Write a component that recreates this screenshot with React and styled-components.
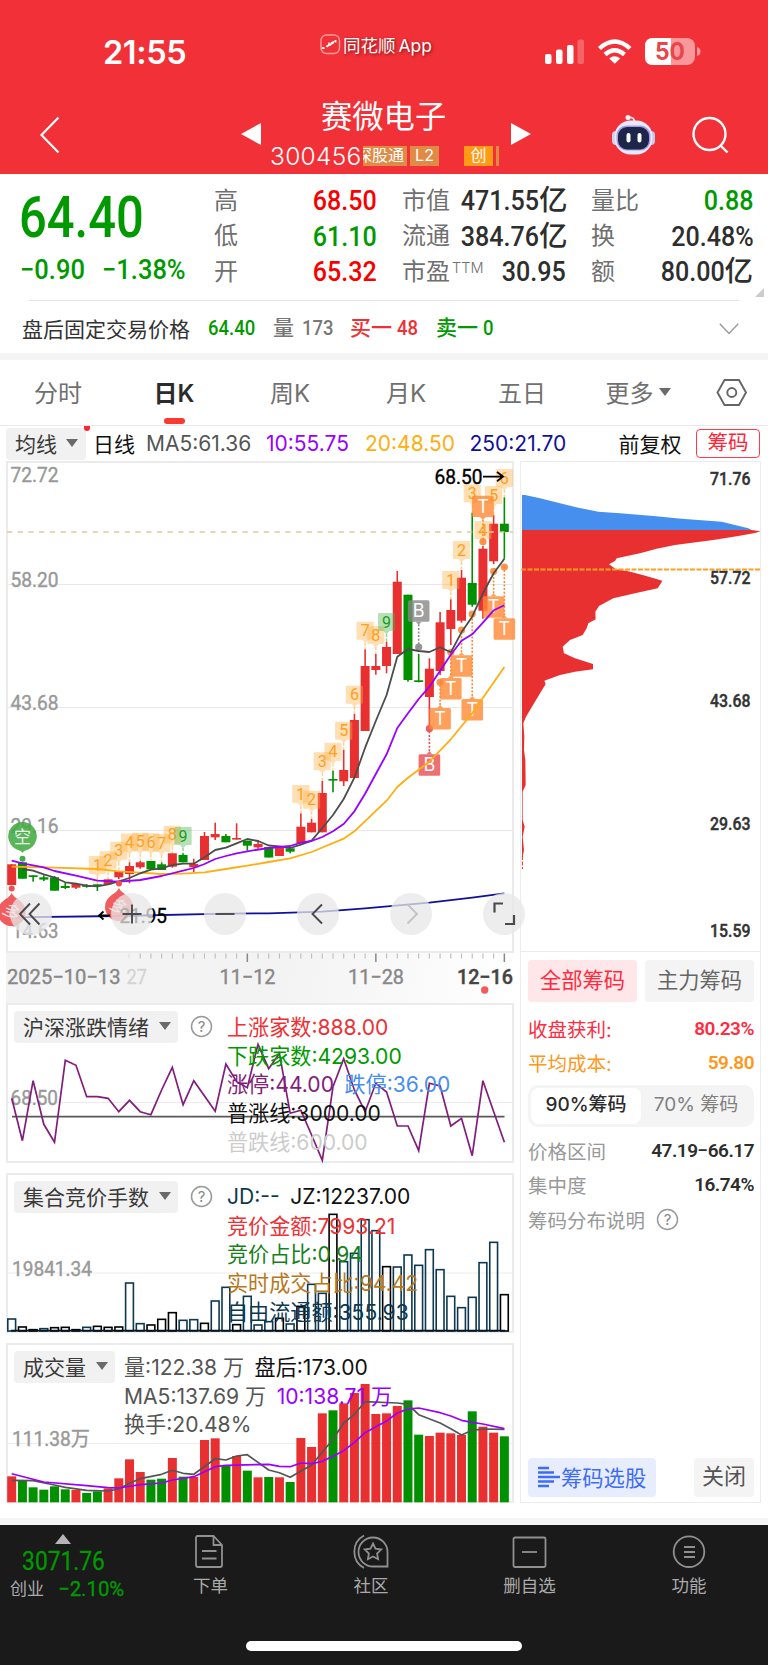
import React from 'react'
import styled, { createGlobalStyle } from 'styled-components'

const RED = '#e93030'
const GREEN = '#009000'
const DIN = 'Roboto, "Noto Sans CJK SC", sans-serif'

// x of the centre of the nth trading day, shared by all four charts
const dayX = i => 11.7 + i * 10.71

// [up, body top, body bottom, high, low]
const candles = [
  [1, 864.3, 885, 864.3, 885], [0, 862.3, 878.7, 862.3, 878.7], [0, 875.3, 877, 875.3, 881.7],
  [0, 877.3, 879.6, 875.3, 881], [0, 877.3, 890.7, 876, 890.7], [0, 886, 888, 882.7, 889],
  [1, 884, 887.7, 884, 889], [0, 885.3, 886.9, 884, 887.7], [0, 884.3, 885.9, 884.3, 891],
  [1, 879.3, 884.3, 879.3, 884.3], [1, 871, 877.3, 871, 879], [1, 866, 874, 862.3, 883.3],
  [1, 862.3, 867.3, 861, 868.7], [0, 861, 869.3, 861, 869.3], [0, 864.3, 870, 862.3, 870],
  [1, 853.3, 866.7, 853.3, 867.7], [0, 855, 862.3, 853.3, 862.3], [1, 864, 867.3, 858.7, 872.3],
  [1, 836, 860, 832, 860], [1, 834, 837.3, 822.7, 840], [0, 836, 842.3, 834, 842.3],
  [1, 838, 839.6, 823.3, 839.6], [0, 840.7, 845.7, 840.7, 850.7], [1, 844, 847.3, 840, 848.7],
  [0, 847, 857.5, 847, 857.5], [1, 847.7, 856, 847.7, 856], [0, 848.3, 851.7, 846.7, 853.3],
  [1, 826.7, 843.3, 813.3, 843.3], [1, 822.7, 832.3, 819, 832.3], [1, 793, 832.3, 781, 832.3],
  [0, 779, 780.6, 770.7, 792.3], [1, 770, 781.3, 750, 786], [1, 720, 778, 714, 778],
  [1, 666, 731, 649.3, 731], [1, 666, 670, 654, 674.7], [1, 647, 666, 641.7, 673.3],
  [1, 581.7, 654, 571, 654], [0, 594.7, 680, 594.7, 681.7], [0, 680.3, 682, 654, 682.3],
  [1, 668.7, 697, 658.3, 726.7], [1, 622.3, 671, 612, 675], [1, 610, 629, 599.3, 645],
  [1, 577.7, 620.7, 570, 622.7], [0, 583, 604.7, 512.7, 606.7], [1, 548.7, 610.7, 546, 618.7],
  [1, 523.7, 561.3, 515, 564], [0, 523.7, 532, 497.3, 558.7],
]

// moving averages as [day, y]
const ma5 = [
  [1, 869], [2, 870.7], [3, 874.3], [4, 877.5], [5, 882.3], [6, 883.7], [7, 885.7], [8, 886.3], [9, 884.3],
  [10, 881.3], [11, 878], [12, 873.3], [13, 869.7], [14, 868.3], [15, 865], [16, 863.7], [17, 863.7],
  [18, 857.3], [19, 850], [20, 847.7], [21, 843.3], [22, 839], [23, 841], [24, 845.5], [25, 846.3],
  [26, 848], [27, 844.7], [28, 840.7], [29, 828], [30, 815], [31, 799], [32, 777.7], [33, 747.7],
  [34, 721], [35, 695], [36, 656.7], [37, 649], [38, 651], [39, 652], [40, 647.3], [41, 652.3],
  [42, 632.3], [43, 616.7], [44, 593.3], [45, 573.3], [46, 558.7],
]
const ma10 = [
  [0, 860.7], [1, 863.3], [3, 867.3], [4, 871], [6, 875.7], [8, 880.7], [10, 881.7], [12, 880], [14, 876],
  [16, 870.7], [17, 868], [18, 864], [19, 859], [20, 856], [21, 853.3], [22, 851.3], [24, 848],
  [26, 846], [27, 842.7], [28, 841], [29, 837], [30, 831.3], [31, 824], [32, 811.3], [33, 793.7],
  [34, 774], [35, 754.3], [36, 728], [37, 713.3], [38, 699], [39, 686.7], [40, 670.7], [41, 654.7],
  [42, 640.7], [43, 634.3], [44, 622.7], [45, 610.3], [46, 605.3],
]
const ma20 = [
  [0, 866.7], [4, 867.7], [8, 869], [10, 871.3], [12, 872.7], [14, 874], [16, 873.7], [18, 872.3],
  [20, 869], [22, 865.7], [24, 862], [26, 858.3], [28, 852], [31, 838.7], [32, 831.3], [35, 800.7],
  [36, 787], [37, 777.7], [39, 761.7], [41, 739.3], [43, 713.3], [46, 667],
]
const ma250 = [
  [0, 917.3], [10, 916], [20, 913.7], [24, 913.3], [29, 911.7], [33, 908.3], [39, 902.7], [43, 897.7], [46, 893.3],
]

// nine-turn counters: [day, label, top of tag]
const turns = [
  [8, 1, 856], [9, 2, 851.3], [10, 3, 841.7], [11, 4, 833.5], [12, 5, 832.7], [13, 6, 833.3], [14, 7, 834],
  [15, 8, 825.7], [16, 9, 827], [27, 1, 785], [28, 2, 790.7], [29, 3, 752.3], [30, 4, 742.7], [31, 5, 721.7],
  [32, 6, 685.7], [33, 7, 621.7], [34, 8, 626], [35, 9, 613], [41, 1, 571], [42, 2, 541], [43, 3, 484.3],
  [44, 4, 521], [45, 5, 486], [46, 6, 469],
]

// buy / T signals: [day, letter, top of tag, dot y, colour]
const signals = [
  [38, 'B', 600.3, 647, '#888888'], [39, 'B', 754.3, 728.7, '#ea4c50'], [44, 'T', 495.7, 541.7, '#ff8a35'],
  [40, 'T', 708, 682.3, '#ff8a35'], [41, 'T', 678, 652.3, '#ff8a35'], [42, 'T', 655.3, 630, '#ff8a35'],
  [43, 'T', 699, 614, '#ff8a35'], [45, 'T', 596.3, 571.3, '#ff8a35'], [46, 'T', 618.3, 567, '#ff8a35'],
]

const sentiment = [
  475, 602, 422, 553, 607, 361, 376, 470, 470, 475, 515, 481, 515, 524, 450, 382, 494, 422, 468, 514, 372, 425,
  443, 313, 386, 340, 520, 511, 585, 661, 440, 356, 450, 515, 430, 456, 558, 558, 632, 430, 438, 558, 535, 647,
  422, 515, 607,
].map((v, i) => [i, 940 + v / 3])

const auction = [
  462, 486, 494, 491, 488, 487, 494, 487, 484, 487, 486, 354, 476, 480, 463, 443, 466, 464, 475, 408, 367, 479,
  394, 480, 470, 460, 477, 424, 358, 385, 148, 290, 265, 164, 197, 305, 306, 270, 301, 254, 314, 394, 428, 397,
  293, 232, 389,
]
const auctionBlack = [1, 2, 4, 5, 6, 8, 9, 10, 13, 14, 15, 18, 21, 25, 27, 30, 35, 46]

const volume = [
  424, 436, 457, 464, 454, 463, 465, 474, 469, 460, 430, 373, 411, 434, 431, 369, 425, 426, 315, 310, 391, 363,
  407, 427, 426, 427, 441, 309, 336, 235, 226, 205, 174, 147, 237, 235, 213, 196, 299, 303, 293, 295, 300, 229,
  275, 293, 304,
]
const volumeDown = [1, 2, 3, 4, 5, 7, 8, 13, 14, 16, 20, 22, 24, 26, 30, 37, 38, 43, 46]
const volMa5 = [
  [0, 436], [2, 437], [4, 450], [5, 457], [7, 466], [9, 468], [10, 462], [11, 445], [12, 431], [14, 418],
  [15, 406], [16, 415], [17, 418], [19, 371], [20, 375], [21, 363], [22, 359], [24, 405], [25, 413], [26, 427],
  [28, 390], [29, 352], [30, 313], [31, 264], [32, 238], [33, 200], [36, 204], [37, 208], [38, 239], [40, 264],
  [41, 281], [42, 300], [43, 286], [44, 282], [46, 283],
].map(([i, v]) => [i, 1335 + v / 3])
const volMa10 = [
  [0, 416], [3, 441], [7, 452], [9, 458], [10, 459], [12, 449], [14, 444], [15, 435], [17, 425], [18, 410],
  [19, 395], [20, 391], [24, 388], [25, 394], [26, 395], [27, 384], [28, 386], [29, 379], [30, 364], [31, 347],
  [32, 322], [33, 293], [34, 275], [35, 258], [36, 234], [37, 222], [38, 219], [40, 233], [41, 243], [42, 256],
  [43, 262], [44, 267], [46, 281],
].map(([i, v]) => [i, 1335 + v / 3])

// chip distribution outline, [width, depth] in thirds of a pixel
const chipsAbove = [
  [45, 105], [90, 115], [150, 130], [205, 143], [265, 155], [330, 160], [430, 168], [515, 176], [635, 185],
  [675, 195], [715, 205], [725, 210],
]
const chipsBelow = [
  [725, 210], [752, 214], [735, 219], [685, 228], [610, 240], [495, 255], [440, 266], [390, 280], [320, 295],
  [315, 303], [297, 313], [318, 328], [355, 334], [398, 345], [457, 362], [453, 370], [443, 385], [375, 400],
  [310, 415], [267, 438], [256, 455], [257, 478], [235, 490], [230, 505], [218, 525], [180, 540], [158, 560],
  [162, 580], [195, 595], [249, 612], [249, 628], [195, 635], [150, 645], [103, 662], [107, 672], [78, 720],
  [48, 770], [40, 790], [43, 830], [42, 870], [46, 900], [47, 975], [38, 995], [38, 1080], [44, 1100],
  [38, 1130], [42, 1170], [38, 1190],
]

const line = pts => pts.map(([i, y]) => `${dayX(i).toFixed(1)},${y.toFixed(1)}`).join(' ')
const chipShape = pts => {
  const edge = pts.map(([x, y]) => `${510 + x / 3},${460 + y / 3}`).join(' ')
  return `522,${460 + pts[0][1] / 3} ${edge} 522,${460 + pts[pts.length - 1][1] / 3}`
}

// number drawn to a fixed width, like the narrow axis digits
function Axis({ x, y, w, size = 20.5, fill = '#999', weight = 400, children }) {
  return (
    <text
      x={x} y={y} textLength={w} lengthAdjust="spacingAndGlyphs"
      fontSize={size} fontWeight={weight} fill={fill} stroke={fill} strokeWidth=".4" fontFamily={DIN}>
      {children}
    </text>
  )
}

function TurnTag({ day, label, top }) {
  const x = dayX(day)
  const color = label === 9 ? '#1b9c1b' : '#ff9d1c'
  const bg = label === 9 ? '#48b548' : '#ffb040'
  const high = candles[day][3]
  return (
    <g>
      <path
        d={`M${x - 8.6} ${top + 1}q0 -1 1 -1h15.2q1 0 1 1v16q0 1 -1 1h-4.6l-3 3.5l-3 -3.5h-4.6q-1 0 -1 -1z`}
        fill={bg} opacity=".4" />
      <line x1={x} x2={x} y1={top + 21} y2={Math.max(high, top + 21)} stroke={bg} opacity=".6" strokeWidth="1.4" strokeDasharray="3 1.5" />
      <text x={x} y={top + 14.5} fontSize="16" fill={color} fontFamily={DIN} textAnchor="middle">{label}</text>
    </g>
  )
}

function SignalTag({ day, letter, top, dot, color }) {
  const x = dayX(day)
  const below = dot > top
  const edge = below ? top + 24 : top - 3
  return (
    <g>
      <line x1={x} x2={x} y1={edge} y2={dot} stroke={color} strokeWidth="1.6" strokeDasharray="2 1.6" />
      <circle cx={x} cy={dot} r="3.6" fill={color} opacity=".9" />
      <g opacity=".8">
        <rect x={x - 10.8} y={top} width="21.6" height="21.4" rx="1.5" fill={color} />
        <path d={below ? `M${x - 3} ${top + 21.4}h6l-3 3z` : `M${x - 3} ${top}h6l-3 -3z`} fill={color} />
      </g>
      <text x={x} y={top + 17} fontSize="18" fill="#fff" fontFamily="Inter, sans-serif" textAnchor="middle">{letter}</text>
    </g>
  )
}

function BearPin({ x, tip }) {
  return (
    <g>
      <circle cx={x} cy={tip - 4.5} r="3" fill="#ee4f52" />
      <path
        d={`M${x} ${tip}c2 4 5 5 8.5 8a14 14 0 1 1 -17 0c3.5 -3 6.5 -4 8.5 -8z`}
        fill="#f04a4d" opacity=".9" />
      <text
        transform={`translate(${x} ${tip + 19}) rotate(38)`} y="6" fontSize="17" fill="#fff" opacity=".85"
        fontFamily="Noto Sans CJK SC, sans-serif" textAnchor="middle">
        多
      </text>
    </g>
  )
}

function KLineChart() {
  return (
    <ChartSvg viewBox="6 461 508 492">
      {[584.5, 707.5, 830.5].map(y => <line key={y} x1="7" x2="513" y1={y} y2={y} stroke="#e8e8e8" />)}
      <Axis x={10.5} y={482.3} w={48}>72.72</Axis>
      <Axis x={10.5} y={587} w={48}>58.20</Axis>
      <Axis x={10.5} y={710.3} w={48}>43.68</Axis>
      <Axis x={10.5} y={833.2} w={48}>29.16</Axis>
      <Axis x={12} y={938} w={46.5}>14.63</Axis>
      {candles.map(([up, top, bottom, high, low], i) => (
        <g key={i} fill={up ? RED : GREEN}>
          <rect x={dayX(i) - 0.8} y={high} width="1.6" height={low - high} />
          <rect x={dayX(i) - 4.5} y={top} width="9" height={bottom - top} />
        </g>
      ))}
      <line x1="7" x2="513" y1="532" y2="532" stroke="#e3c79f" strokeWidth="1.5" strokeDasharray="5.3 5.4" />
      {turns.map(([day, label, top]) => <TurnTag key={day} day={day} label={label} top={top} />)}
      {signals.map(([day, letter, top, dot, color]) => (
        <SignalTag key={day} day={day} letter={letter} top={top} dot={dot} color={color} />
      ))}
      <g fill="none" strokeWidth="1.8" strokeLinejoin="round">
        <polyline points={line(ma250)} stroke="#10109c" />
        <polyline points={line(ma20)} stroke="#ffae10" />
        <polyline points={line(ma5)} stroke="#4c4c4c" />
        <polyline points={line(ma10)} stroke="#9a00ff" />
      </g>
      <circle cx="22.5" cy="858.7" r="3" fill="#46ad46" />
      <path d="M22.5 853c-2 -3 -4 -2.5 -7.5 -4.5a14.3 14.3 0 1 1 15 0c-3.5 2 -5.5 1.5 -7.5 4.5z" fill="#43ab43" opacity=".88" />
      <text x="22.5" y="842.5" fontSize="17" fill="#fff" opacity=".85" fontFamily="Noto Sans CJK SC, sans-serif" textAnchor="middle">空</text>
      <BearPin x={11.7} tip={893} />
      <BearPin x={119} tip={888} />
      <Axis x={434.5} y={484} w={48} size={21} fill="#000">68.50</Axis>
      <path d="M483 476.6h19M497 472l6 4.6l-6 4.6" stroke="#000" strokeWidth="1.8" fill="none" />
      <path d="M110 915.5h-10.5M103.5 911.5l-4.5 4l4.5 4" stroke="#000" strokeWidth="1.8" fill="none" />
      <Axis x={119.5} y={922.7} w={47.5} size={21} fill="#000">21.95</Axis>
    </ChartSvg>
  )
}

function TimeAxis() {
  const days = Array.from({ length: 35 }, (_, i) => i + 12)
  return (
    <ChartSvg viewBox="6 953 508 50">
      <line x1="129" x2="129" y1="953.5" y2="958.5" stroke="#ddd" />
      {days.map(i => {
        const major = i === 22 || i === 34 || i === 46
        return (
          <line
            key={i} x1={dayX(i)} x2={dayX(i)} y1="953.5" y2={major ? 962 : 958.5}
            stroke={major ? '#888' : '#bbb'} strokeWidth={major ? 1.5 : 1.1} />
        )
      })}
      <Axis x={7} y={984.3} w={113.5} size={21} fill="#888">2025−10−13</Axis>
      <Axis x={126.5} y={984.3} w={20.5} size={21} fill="#d4d4d4">27</Axis>
      <Axis x={219.5} y={984.3} w={56} size={21} fill="#888">11−12</Axis>
      <Axis x={348} y={984.3} w={56} size={21} fill="#888">11−28</Axis>
      <Axis x={457} y={984.3} w={56} size={21} fill="#444" weight={500}>12−16</Axis>
      <circle cx="484.7" cy="990" r="3.7" fill="#f55a5a" />
    </ChartSvg>
  )
}

function SentimentChart() {
  return (
    <ChartSvg viewBox="6 1003 508 160">
      <line x1="8" x2="512" y1="1102.5" y2="1102.5" stroke="#ececec" />
      <Axis x={10.5} y={1105} w={47.5}>68.50</Axis>
      <line x1="12" x2="504.5" y1="1116.6" y2="1116.6" stroke="#585858" strokeWidth="1.6" />
      <polyline points={line(sentiment)} fill="none" stroke="#831d7c" strokeWidth="1.7" />
    </ChartSvg>
  )
}

function AuctionChart() {
  return (
    <ChartSvg viewBox="6 1173 508 160">
      <line x1="8" x2="512" y1="1273" y2="1273" stroke="#ececec" />
      <Axis x={12} y={1276} w={80}>19841.34</Axis>
      {auction.map((v, i) => {
        const top = 1165 + v / 3
        return (
          <rect
            key={i} x={dayX(i) - 3.9} y={top} width="7.8" height={Math.max(1331 - top, 0.5)}
            fill="none" stroke={auctionBlack.includes(i) ? '#000' : '#0d3850'} strokeWidth="1.6" />
        )
      })}
      <line x1="11" x2="505" y1="1330.7" y2="1330.7" stroke="#04151f" strokeWidth="1.8" />
    </ChartSvg>
  )
}

function VolumeChart() {
  return (
    <ChartSvg viewBox="6 1343 508 160">
      <line x1="8" x2="512" y1="1443.5" y2="1443.5" stroke="#ececec" />
      <Axis x={12} y={1446} w={78}>111.38万</Axis>
      {volume.map((v, i) => {
        const top = 1335 + v / 3
        return (
          <rect
            key={i} x={dayX(i) - 4.5} y={top} width="9" height={1502.3 - top}
            fill={volumeDown.includes(i) ? GREEN : RED} />
        )
      })}
      <g fill="none" strokeWidth="1.7" strokeLinejoin="round">
        <polyline points={line(volMa5)} stroke="#555" />
        <polyline points={line(volMa10)} stroke="#9a00ff" />
      </g>
    </ChartSvg>
  )
}

function ChipChart() {
  const prices = [['71.76', 484.7], ['57.72', 584.3], ['43.68', 707], ['29.63', 829.7], ['15.59', 936.7]]
  return (
    <ChartSvg viewBox="520 461 241 491">
      <polygon points={chipShape(chipsAbove)} fill="#468fee" />
      <polygon points={chipShape(chipsBelow)} fill={RED} />
      <line x1="522.4" x2="522.4" y1="856" y2="869" stroke={RED} strokeDasharray="4 1.5" />
      <line x1="521" x2="760" y1="569.5" y2="569.5" stroke="#ff9f1f" strokeWidth="1.8" strokeDasharray="5 1.5" />
      {prices.map(([label, y]) => (
        <Axis key={label} x={710} y={y} w={40.5} size={18} weight={500} fill="#333">{label}</Axis>
      ))}
    </ChartSvg>
  )
}

function Help() {
  return (
    <svg width="23" height="23" viewBox="0 0 23 23">
      <circle cx="11.5" cy="11.5" r="10" fill="none" stroke="#999" strokeWidth="1.5" />
      <text x="11.5" y="16.8" fontSize="15" textAnchor="middle" fill="#888" fontFamily="Inter, sans-serif">?</text>
    </svg>
  )
}

function Robot() {
  return (
    <svg width="44" height="42" viewBox="612 113 44 42">
      <path d="M628 116.5q6 -1 6.5 4" fill="none" stroke="#e9e6f5" strokeWidth="1.8" />
      <circle cx="628" cy="116.5" r="2.5" fill="#f4f2fb" />
      <rect x="612" y="130" width="8" height="14" rx="4" fill="#ccd0ec" />
      <rect x="647" y="130" width="8" height="14" rx="4" fill="#c3c9e8" />
      <rect x="614.5" y="119.5" width="38" height="34" rx="16" fill="#e8eafa" />
      <rect x="616.5" y="124.5" width="34" height="25" rx="10" fill="#a79be8" />
      <rect x="618" y="126" width="31" height="22.5" rx="9" fill="#1d2548" />
      <rect x="626.5" y="132" width="4" height="9.5" rx="2" fill="#fff" />
      <rect x="637.5" y="132" width="4" height="9.5" rx="2" fill="#fff" />
    </svg>
  )
}

const toolIcons = [
  <path d="M20 10.5l-10 10.5l10 10.5M29.5 10.5l-10 10.5l10 10.5" />,
  <path d="M11.5 21h19M21 11.5v19" />,
  <path d="M11.5 21h19" />,
  <path d="M25 11.5l-9.5 9.5l9.5 9.5" />,
  <path d="M17.5 11.5l9.5 9.5l-9.5 9.5" stroke="#c4c4c4" />,
  <path d="M11.5 19.5v-9h8.5M31 22v9h-9" strokeWidth="2.2" />,
]

const tabs = ['分时', '日K', '周K', '月K', '五日']

const navItems = [
  ['下单', (
    <g>
      <path d="M5.5 3h16l8.5 9v20q0 2 -2 2h-22q-2 0 -2 -2v-27q0 -2 1.5 -2z" />
      <path d="M21.5 3v9h8.5M10 18h14.5M10 25.5h14.5" />
    </g>
  )],
  ['社区', (
    <g>
      <path d="M34.5 33.500h-14a14.500 14.500 0 1 1 14 -14.500z" />
      <path d="M11 2.5a18.5 18.5 0 0 0 0 32.5" />
      <path d="M20 10.5l2.5 5.2l5.7 .8l-4.100 4l1 5.7l-5.1 -2.7l-5.100 2.7l1 -5.7l-4.1 -4l5.7 -.8z" />
    </g>
  )],
  ['删自选', (
    <g>
      <rect x="2.5" y="4.5" width="32" height="29.5" rx="1.5" />
      <path d="M11 19h15" />
    </g>
  )],
  ['功能', (
    <g>
      <circle cx="18" cy="18.7" r="15.3" />
      <path d="M13 14h11M13 19h11M13 24h11" />
    </g>
  )],
]

export default function App() {
  return (
    <Page>
      <GlobalStyle />
      <Header>
        <StatusBar>
          <Clock>21:55</Clock>
          <AppName>
            <svg width="21" height="21" viewBox="0 0 21 21">
              <rect x="1" y="1" width="18.5" height="18.5" rx="5.5" fill="none" stroke="#ff9c9c" strokeWidth="1.4" />
              <path d="M2 13.5q1.500 1.500 2.500 0M6.500 11.500q1 2 2.500 -1.500q1 2.500 2.500 -1q1.500 1 2 -2M15.500 6v2.500" fill="none" stroke="#fff" strokeWidth="1.8" />
            </svg>
            <span>同花顺<i>App</i></span>
          </AppName>
          <svg width="160" height="30" viewBox="544 37 160 30">
            <rect x="545" y="54" width="6.5" height="10" rx="2" fill="#fff" />
            <rect x="556" y="49.5" width="6.5" height="14.5" rx="2" fill="#fff" />
            <rect x="567" y="45" width="6.5" height="19" rx="2" fill="#fff" />
            <rect x="577.5" y="39.5" width="6.5" height="24.5" rx="2" fill="#fff" opacity=".25" />
            <g fill="none" stroke="#fff" strokeWidth="4.4">
              <path d="M599.5 48.5q15.2 -14 30.5 0" />
              <path d="M605 54.5q9.7 -8.5 19.5 0" />
            </g>
            <path d="M614.7 63.8l-5.5 -5.3q5.5 -4.3 11 0z" fill="#fff" />
            <rect x="645" y="38" width="50" height="27" rx="8" fill="#fff" opacity=".5" />
            <path d="M671 38v27h-18q-8 0 -8 -8v-11q0 -8 8 -8z" fill="#fff" />
            <path d="M697 47q3.5 1 3.5 4.5t-3.5 4.5z" fill="#fff" opacity=".5" />
            <text x="670" y="60" fontSize="24" fontWeight="700" fill="#e9464c" textAnchor="middle" fontFamily="Inter, sans-serif" textLength="30" lengthAdjust="spacingAndGlyphs">50</text>
          </svg>
        </StatusBar>
        <TitleBar>
          <BackIcon width="22" height="38" viewBox="0 0 22 38">
            <path d="M19.5 1.5l-17 17.5l17 17.5" fill="none" stroke="#fff" strokeWidth="2.2" />
          </BackIcon>
          <Arrow viewBox="0 0 20 22"><path d="M20 0v22l-20 -11z" fill="#fff" /></Arrow>
          <StockName>
            <h1>赛微电子</h1>
            <CodeRow>
              <Code>300456</Code>
              <Tag $w={44}><ClippedText>深股通</ClippedText></Tag>
              <Tag $w={29}>L2</Tag>
              <Tag $w={29} $bg="#ff9a16" $gap={22}>创</Tag>
              <Tag $w={3} />
            </CodeRow>
          </StockName>
          <Arrow viewBox="0 0 20 22"><path d="M0 0v22l20 -11z" fill="#fff" /></Arrow>
          <HeaderActions>
            <Robot />
            <svg width="38" height="38" viewBox="0 0 38 38">
              <g fill="none" stroke="#fff" strokeWidth="2.4">
                <circle cx="17.5" cy="18" r="16" />
                <path d="M28.5 29.5l7 7" />
              </g>
            </svg>
          </HeaderActions>
        </TitleBar>
      </Header>

      <Quote>
        <PriceBlock>
          <Price>64.40</Price>
          <Change><span>−0.90</span><span>−1.38%</span></Change>
        </PriceBlock>
        <Stat><Label>高</Label><Value $c="#f70000"><Num $right>68.50</Num></Value></Stat>
        <Stat><Label>市值</Label><Value $unit><Num $right>471.55</Num>亿</Value></Stat>
        <Stat><Label>量比</Label><Value $c="#009a00"><Num $right>0.88</Num></Value></Stat>
        <Stat><Label>低</Label><Value $c="#009a00"><Num $right>61.10</Num></Value></Stat>
        <Stat><Label>流通</Label><Value $unit><Num $right>384.76</Num>亿</Value></Stat>
        <Stat><Label>换</Label><Value><Num $right>20.48%</Num></Value></Stat>
        <Stat><Label>开</Label><Value $c="#f70000"><Num $right>65.32</Num></Value></Stat>
        <Stat><Label>市盈<sup>TTM</sup></Label><Value><Num $right>30.95</Num></Value></Stat>
        <Stat><Label>额</Label><Value $unit><Num $right>80.00</Num>亿</Value></Stat>
        <Corner viewBox="0 0 9 9"><path d="M9 0v9h-9z" fill="#ccc" /></Corner>
      </Quote>
      <AfterHours>
        <span>盘后固定交易价格</span>
        <Ah $c="#009a00"><Num>64.40</Num></Ah>
        <Ah $c="#777">量</Ah>
        <Ah $c="#777"><Num>173</Num></Ah>
        <Ah $c="#ee3034">买一</Ah>
        <Ah $c="#ee3034"><Num>48</Num></Ah>
        <Ah $c="#009a00">卖一</Ah>
        <Ah $c="#009a00"><Num>0</Num></Ah>
        <svg width="20" height="12" viewBox="0 0 20 12">
          <path d="M.8 .8l9.2 9.7l9.2 -9.7" fill="none" stroke="#999" strokeWidth="1.4" />
        </svg>
      </AfterHours>
      <Band />

      <Tabs>
        {tabs.map(name => <Tab key={name} $active={name === '日K'}>{name}</Tab>)}
        <Tab>更多<Caret $gap={5} /></Tab>
        <Settings>
          <svg width="32" height="30" viewBox="0 0 32 30">
            <g fill="none" stroke="#666" strokeWidth="1.9">
              <path d="M8.5 2h14.5l7 12.5l-7 12.5h-14.5l-7 -12.5z" />
              <circle cx="15.8" cy="14.5" r="4.5" />
            </g>
          </svg>
        </Settings>
      </Tabs>
      <Indicators>
        <Picker $w={80}>均线<Caret $gap={9} /></Picker>
        <NewDot />
        <Ind $w={53} $c="#111">日线</Ind>
        <Ind $w={120} $c="#555">MA5:61.36</Ind>
        <Ind $w={99} $c="#9a00ff">10:55.75</Ind>
        <Ind $w={104.5} $c="#ffae10">20:48.50</Ind>
        <Ind $w={149} $c="#10109c">250:21.70</Ind>
        <Ind $w={77.5} $c="#111">前复权</Ind>
        <ChipToggle>筹码</ChipToggle>
      </Indicators>

      <Body>
        <Left>
          <ChartBox $h={492}>
            <KLineChart />
            <Tools>
              {toolIcons.map((icon, i) => (
                <Tool key={i}>
                  <svg width="42" height="42" fill="none" stroke="#4a4a4a" strokeWidth="1.9">{icon}</svg>
                </Tool>
              ))}
            </Tools>
          </ChartBox>
          <AxisBox><TimeAxis /></AxisBox>
          <ChartBox $h={160}>
            <SentimentChart />
            <Overlay>
              <Picker $w={164}>沪深涨跌情绪<Caret $gap={10} /></Picker>
              <HelpSlot><Help /></HelpSlot>
              <Legend>
                <div><Ink $c="#ee3034">上涨家数:888.00</Ink></div>
                <div><Ink $c="#009a00">下跌家数:4293.00</Ink></div>
                <div><Ink $c="#831d7c">涨停:44.00</Ink><Ink $c="#468fee">跌停:36.00</Ink></div>
                <div><Ink $c="#111">普涨线:3000.00</Ink></div>
                <div><Ink $c="#ccc">普跌线:600.00</Ink></div>
              </Legend>
            </Overlay>
          </ChartBox>
          <ChartBox $h={160} $mt={10}>
            <AuctionChart />
            <Overlay>
              <Picker $w={164}>集合竞价手数<Caret $gap={10} /></Picker>
              <HelpSlot><Help /></HelpSlot>
              <Legend>
                <div><Ink $c="#0d3850">JD:--</Ink><Ink $c="#111">JZ:12237.00</Ink></div>
                <div><Ink $c="#ee3034">竞价金额:7993.21</Ink></div>
                <div><Ink $c="#16801a">竞价占比:0.94</Ink></div>
                <div><Ink $c="#b87820">实时成交占比:94.42</Ink></div>
                <div><Ink $c="#0d3850">自由流通额:355.93</Ink></div>
              </Legend>
            </Overlay>
          </ChartBox>
          <ChartBox $h={160} $mt={10}>
            <VolumeChart />
            <Overlay>
              <Picker $w={101}>成交量<Caret $gap={10} /></Picker>
              <Legend $ml={9}>
                <div><Ink $c="#555">量:122.38 万</Ink><Ink $c="#111">盘后:173.00</Ink></div>
                <div><Ink $c="#555">MA5:137.69 万</Ink><Ink $c="#9a00ff">10:138.71 万</Ink></div>
                <div><Ink $c="#555">换手:20.48%</Ink></div>
              </Legend>
            </Overlay>
          </ChartBox>
        </Left>

        <Side>
          <ChipBox><ChipChart /></ChipBox>
          <ChipInfo>
            <Pair>
              <ScopeButton $active>全部筹码</ScopeButton>
              <ScopeButton>主力筹码</ScopeButton>
            </Pair>
            <InfoRow $c="#ff2b40" $vc="#ff2b40" $mt={9}><span>收盘获利:</span><Bold>80.23%</Bold></InfoRow>
            <InfoRow $c="#ff981a" $vc="#ff981a"><span>平均成本:</span><Bold>59.80</Bold></InfoRow>
            <Segment>
              <SegmentItem $active>90%筹码</SegmentItem>
              <SegmentItem>70% 筹码</SegmentItem>
            </Segment>
            <InfoRow $mt={6}><span>价格区间</span><Bold>47.19−66.17</Bold></InfoRow>
            <InfoRow><span>集中度</span><Bold>16.74%</Bold></InfoRow>
            <InfoRow $mt={1}><span>筹码分布说明</span><HelpInline><Help /></HelpInline></InfoRow>
            <SideFooter>
              <PickButton>
                <svg width="22" height="22" viewBox="0 0 22 22">
                  <path d="M0 2h11M0 6.500h16M0 11h22M0 15.500h16M0 20h11" stroke="#3d6cf5" strokeWidth="2.500" />
                </svg>
                筹码选股
              </PickButton>
              <CloseButton>关闭</CloseButton>
            </SideFooter>
          </ChipInfo>
        </Side>
      </Body>

      <BottomNav>
        <NavRow>
          <IndexBlock>
            <svg width="16" height="10" viewBox="0 0 16 10"><path d="M8 0l8 10h-16z" fill="#b5b5b5" /></svg>
            <IndexPrice>3071.76</IndexPrice>
            <IndexChange>创业<b>−2.10%</b></IndexChange>
          </IndexBlock>
          {navItems.map(([name, icon]) => (
            <NavItem key={name}>
              <svg width="37" height="37" viewBox="0 0 37 37" fill="none" stroke="#909090" strokeWidth="1.8">{icon}</svg>
              {name}
            </NavItem>
          ))}
        </NavRow>
        <HomeBar />
      </BottomNav>
    </Page>
  )
}

const GlobalStyle = createGlobalStyle`
  * { box-sizing: border-box; }
  body { margin: 0; }
  svg { display: block; flex: none; }
`

const Page = styled.div`
  width: 768px;
  height: 1665px;
  overflow: hidden;
  display: flex;
  flex-direction: column;
  background: #fff;
  color: #333;
  font-family: Inter, "Noto Sans CJK SC", sans-serif;
  white-space: nowrap;
`

const Header = styled.header`
  height: 174px;
  background: #f23037;
  color: #fff;
`

const StatusBar = styled.div`
  display: grid;
  grid-template-columns: 217px 224px 1fr;
  height: 90px;
  padding: 33px 0 0 103px;

  > svg { margin-top: 4px; }
`

const Clock = styled.div`
  font-size: 32.5px;
  font-weight: 600;
  line-height: 40px;
  letter-spacing: -.4px;
`

const AppName = styled.div`
  display: flex;
  gap: 2px;
  height: 22px;
  align-items: center;
  font-size: 17.5px;
  text-shadow: 1px 1px 3px rgba(80, 0, 0, .7);

  i {
    margin-left: 3px;
    font-style: normal;
  }
`

const TitleBar = styled.div`
  display: flex;
  align-items: flex-start;
  height: 84px;
  padding-left: 39px;
`

const BackIcon = styled.svg`
  margin: 26px 180px 0 0;
`

const Arrow = styled.svg`
  width: 20px;
  height: 22px;
  margin-top: 33px;
`

const StockName = styled.div`
  width: 250px;
  padding-left: 10px;

  h1 {
    margin: 5px 0 0 50px;
    font-size: 31.3px;
    font-weight: 400;
    line-height: 44px;
  }
`

const CodeRow = styled.div`
  display: flex;
  align-items: center;
  gap: 3px;
  height: 34px;
`

const Code = styled.span`
  width: 90px;
  margin-left: -1px;
  font-size: 24.5px;
  font-weight: 300;
  letter-spacing: .3px;
`

const Tag = styled.span`
  display: flex;
  justify-content: center;
  width: ${p => p.$w}px;
  height: 20px;
  margin-left: ${p => p.$gap || 0}px;
  overflow: hidden;
  background: ${p => p.$bg || '#e18a45'};
  font-size: 16px;
  line-height: 19px;
`

const ClippedText = styled.span`
  margin-left: -10px;
`

const HeaderActions = styled.div`
  display: flex;
  gap: 36px;
  margin: 24px 0 0 81px;

  svg:last-child { margin-top: 2px; }
`

const Quote = styled.section`
  display: grid;
  grid-template-columns: 163px 188px 189px 163px;
  grid-template-rows: repeat(3, 35.5px);
  position: relative;
  height: 126px;
  padding: 9px 0 0 20px;
  width: 768px;

  &::after {
    content: '';
    position: absolute;
    left: 29px;
    right: 29px;
    bottom: -1px;
    height: 1px;
    background: #e6e6e6;
  }
`

const PriceBlock = styled.div`
  grid-row: 1 / 4;
  width: 194px;
  font-family: Roboto, sans-serif;
  font-weight: 500;
  color: #009a00;
`

const Price = styled.div`
  font-size: 56.5px;
  line-height: 66px;
  height: 70px;
  margin: 2px 0 0 -1px;
  transform: scaleX(.865);
  transform-origin: 0 0;
`

const Change = styled.div`
  display: grid;
  grid-template-columns: 82px 100px;
  font-size: 28px;
  font-weight: 500;
  line-height: 30px;

  span {
    transform: scaleX(.91);
    transform-origin: 0 0;
  }
`

const Num = styled.span`
  display: inline-block;
  transform: scaleX(.88);
  transform-origin: ${p => (p.$right ? '100%' : '0')} 50%;
`

const Stat = styled.div`
  display: flex;
  justify-content: space-between;
  height: 35.5px;
  align-items: center;
  margin-left: 31px;
  margin-right: -31px;
  padding-right: 25px;

  &:nth-of-type(3n + 1) { padding-right: 0; }
`

const Label = styled.span`
  color: #707070;
  font-size: 24px;
  line-height: 34px;

  sup {
    font-size: 14.5px;
    font-weight: 300;
    margin-left: 2px;
    vertical-align: 7px;
    line-height: 0;
  }
`

const Value = styled.span`
  margin-right: ${p => (p.$unit ? 1 : 0)}px;
  color: ${p => p.$c || '#2e2e2e'};
  font-family: ${DIN};
  font-size: 28.5px;
  font-weight: 500;
  line-height: 35px;
`

const Corner = styled.svg`
  position: absolute;
  right: 4px;
  bottom: 3px;
  width: 9px;
  height: 9px;
`

const AfterHours = styled.section`
  display: grid;
  grid-template-columns: 186px 65px 29px 48px 47px 39px 47px 236px 20px;
  align-items: center;
  height: 53px;
  padding: 2px 0 0 22px;
  font-size: 21px;

  > svg { margin-top: 2px; }
`

const Ah = styled.span`
  color: ${p => p.$c};
  font-family: ${DIN};
  font-weight: 500;
  line-height: 30px;
`

const Band = styled.div`
  height: 7px;
  background: #f4f4f4;
`

const Tabs = styled.nav`
  display: grid;
  grid-template-columns: repeat(6, 116px) 72px;
  height: 66px;
  border-bottom: 1px solid #e9e9e9;
`

const Tab = styled.div`
  position: relative;
  display: flex;
  align-items: center;
  justify-content: center;
  padding-bottom: 2px;
  font-size: 24px;
  color: ${p => (p.$active ? '#2b2b2b' : '#707070')};
  font-weight: ${p => (p.$active ? 600 : 400)};

  &::after {
    content: '';
    display: ${p => (p.$active ? 'block' : 'none')};
    position: absolute;
    left: 48px;
    bottom: 1px;
    width: 21px;
    height: 6px;
    border-radius: 3px;
    background: #fa3932;
  }
`

const Caret = styled.i`
  margin-left: ${p => p.$gap}px;
  border: 6px solid transparent;
  border-top: 8px solid #6a6a6a;
  border-bottom: 0;
`

const Settings = styled.div`
  display: flex;
  align-items: center;
  justify-content: center;
`

const Indicators = styled.div`
  display: flex;
  align-items: center;
  height: 35px;
  padding: 0 0 0 6px;
`

const Picker = styled.div`
  display: flex;
  align-items: center;
  width: ${p => p.$w}px;
  height: 32px;
  padding: 0 0 2px 9px;
  border-radius: 4px;
  background: #f1f1f1;
  color: #3a3a3a;
  font-size: 21px;
`

const NewDot = styled.i`
  width: 6px;
  height: 5px;
  margin: -30px 3px 0 -2px;
  border-radius: 0 0 3px 3px;
  background: #ff2436;
`

const Ind = styled.span`
  width: ${p => p.$w}px;
  padding-bottom: 1px;
  color: ${p => p.$c};
  font-size: 21px;
`

const ChipToggle = styled.div`
  width: 64px;
  height: 29px;
  border: 1.5px solid #ff3a4a;
  border-radius: 4px;
  color: #ff2436;
  font-size: 20.5px;
  line-height: 26px;
  text-align: center;
`

const Body = styled.main`
  display: flex;
  gap: 6px;
  height: 1057px;
  padding-left: 6px;
`

const Left = styled.div`
  position: relative;
  z-index: 1;
  width: 508px;
`

const ChartBox = styled.section`
  position: relative;
  height: ${p => p.$h}px;
  margin-top: ${p => p.$mt || 0}px;
  border: 2px solid #ebebeb;
`

const ChartSvg = styled.svg`
  width: calc(100% + 4px);
  height: calc(100% + 4px);
  margin: -2px;
  overflow: visible;
`

const Tools = styled.div`
  position: absolute;
  left: 2px;
  top: 430px;
  display: flex;
  gap: 51px;
`

const Tool = styled.div`
  width: 42px;
  height: 42px;
  border-radius: 50%;
  background: rgba(231, 231, 231, .76);

  &:first-child { margin-right: 8px; }
`

const AxisBox = styled.div`
  height: 50px;
  border: 2px solid transparent;
  background: linear-gradient(100deg, #f3f3f3 55%, #fff) border-box;
`

const Overlay = styled.div`
  position: absolute;
  left: 6px;
  top: 6px;
  display: flex;
`

const HelpSlot = styled.div`
  margin: 4px 14px 0 12px;
`

const Legend = styled.div`
  margin-left: ${p => p.$ml || 0}px;
  margin-top: 1px;

  div {
    display: flex;
    gap: 10.5px;
    height: 28.6px;
    align-items: center;
  }
`

const Ink = styled.span`
  color: ${p => p.$c};
  font-size: 21.1px;
`

const Side = styled.aside`
  width: 241px;
  height: 1042px;
  border: 1.5px solid #ececec;
`

const ChipBox = styled.div`
  height: 491px;
  border-bottom: 1px solid #ececec;

  svg { margin: -1px; width: 241px; height: 491px; }
`

const ChipInfo = styled.div`
  display: flex;
  flex-direction: column;
  height: 549px;
  padding: 8px 6px 4px 7px;
`

const Pair = styled.div`
  display: flex;
  justify-content: space-between;
`

const ScopeButton = styled.div`
  width: 109px;
  height: 42px;
  border-radius: 4px;
  background: ${p => (p.$active ? '#ffe6e9' : '#f4f4f4')};
  color: ${p => (p.$active ? '#ff2b40' : '#666')};
  font-size: 21.3px;
  line-height: 40px;
  text-align: center;
`

const InfoRow = styled.div`
  display: flex;
  align-items: center;
  justify-content: space-between;
  height: 34px;
  margin-top: ${p => p.$mt || 0}px;
  color: ${p => p.$c || '#999'};
  font-size: 19.5px;

  b { color: ${p => p.$vc || '#2e2e2e'}; }
`

const Bold = styled.b`
  font-family: Roboto, sans-serif;
  font-size: 19px;
  font-weight: 600;
  letter-spacing: -.5px;
`

const HelpInline = styled.span`
  flex: 1;
  padding-left: 11px;
`

const Segment = styled.div`
  display: flex;
  height: 42px;
  margin-top: 6px;
  padding: 3px;
  border-radius: 10px;
  background: #f4f4f4;
`

const SegmentItem = styled.div`
  width: 110px;
  height: 36px;
  border-radius: 8px;
  background: ${p => (p.$active ? '#fff' : 'none')};
  color: ${p => (p.$active ? '#2b2b2b' : '#808080')};
  font-size: 19px;
  font-weight: ${p => (p.$active ? 500 : 400)};
  line-height: 34px;
  text-align: center;
`

const SideFooter = styled.div`
  display: flex;
  justify-content: space-between;
  margin-top: auto;
`

const PickButton = styled.div`
  display: flex;
  align-items: center;
  gap: 1px;
  width: 128px;
  height: 39px;
  padding: 0 0 2px 10px;
  border-radius: 4px;
  background: #e8edfe;
  color: #3d6cf5;
  font-size: 21.3px;
`

const CloseButton = styled.div`
  width: 60px;
  height: 39px;
  border-radius: 4px;
  background: #f4f4f4;
  color: #555;
  font-size: 22px;
  line-height: 37px;
  text-align: center;
`

const BottomNav = styled.footer`
  height: 147px;
  border-top: 7px solid #f4f4f4;
  background: #1a1a1a;
`

const NavRow = styled.div`
  display: grid;
  grid-template-columns: 130px 161px 160px 157px 162px;
  height: 116px;
`

const IndexBlock = styled.div`
  display: flex;
  flex-direction: column;
  align-items: center;
  padding: 9px 4px 0 0;
  font-family: ${DIN};
  color: #009a00;
`

const IndexPrice = styled.div`
  margin-top: 4px;
  font-size: 25px;
  line-height: 28px;
  -webkit-text-stroke: .3px;
  transform: scaleX(.91);
`

const IndexChange = styled.div`
  display: flex;
  gap: 14px;
  align-items: center;
  padding-left: 8px;
  color: #aaa;
  font-size: 17px;
  line-height: 27px;

  b {
    color: #009a00;
    font-size: 21px;
    font-weight: 400;
    width: 66px;
    transform: scaleX(.97);
    transform-origin: 0;
    -webkit-text-stroke: .3px;
  }
`

const NavItem = styled.div`
  display: flex;
  flex-direction: column;
  align-items: center;
  padding-top: 8px;
  color: #aaa;
  font-size: 17.5px;
  line-height: 32px;
`

const HomeBar = styled.div`
  width: 276px;
  height: 10px;
  margin-left: 246px;
  border-radius: 5px;
  background: #fff;
`
